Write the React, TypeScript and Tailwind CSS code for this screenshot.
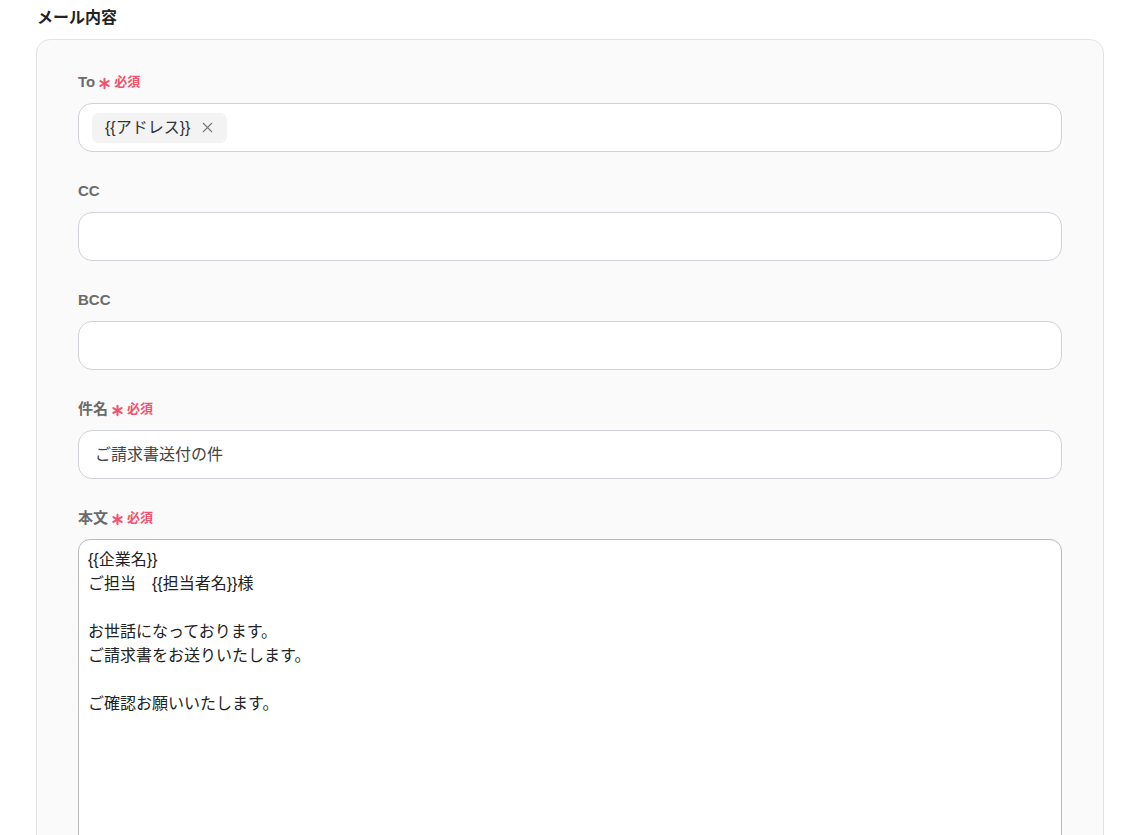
import { X, Asterisk } from "lucide-react";

const font = { fontFamily: '"Liberation Sans", "Noto Sans CJK JP", sans-serif' };

function Label({ text, required }: { text: string; required?: boolean }) {
  return (
    <div className="flex items-center h-5 mb-[11px]">
      <span className="text-[15px] font-bold text-[#6b6b6b]">{text}</span>
      {required && (
        <>
          <Asterisk size={19} strokeWidth={2.6} className="text-[#f5506c] ml-[0px] mr-[0px] mt-[3px]" />
          <span className="text-[13px] font-bold text-[#f5506c]">必須</span>
        </>
      )}
    </div>
  );
}

export default function App() {
  const body = `{{企業名}}
ご担当　{{担当者名}}様

お世話になっております。
ご請求書をお送りいたします。

ご確認お願いいたします。`;

  return (
    <div className="bg-white min-h-[835px] h-[835px] overflow-hidden" style={font}>
      <div className="pl-[36px] pr-[36px] pt-[7px]">
        <h2 className="text-[16px] font-bold text-[#222] h-[22px] leading-[22px] ml-[1px]">メール内容</h2>
        <div className="mt-[10px] bg-[#fafafa] border border-[#e3e3e6] rounded-[14px] px-[41px] pt-[32px] h-[900px]">
          <div className="mb-[29px]">
            <Label text="To" required />
            <div className="h-[49px] bg-white border border-[#cfd2d9] rounded-[14px] flex items-center px-[13px]">
              <div className="h-[30px] bg-[#f3f3f3] rounded-[7px] flex items-center pl-[13px] pr-[11px] gap-[9px]">
                <span className="text-[16px] text-[#333]">{"{{アドレス}}"}</span>
                <X size={17} strokeWidth={1.5} className="text-[#777]" />
              </div>
            </div>
          </div>
          <div className="mb-[29px]">
            <Label text="CC" />
            <div className="h-[49px] bg-white border border-[#cfd2d9] rounded-[14px]" />
          </div>
          <div className="mb-[29px]">
            <Label text="BCC" />
            <div className="h-[49px] bg-white border border-[#cfd2d9] rounded-[14px]" />
          </div>
          <div className="mb-[29px]">
            <Label text="件名" required />
            <div className="h-[49px] bg-white border border-[#cfd2d9] rounded-[14px] flex items-center px-[16px]">
              <span className="text-[16px] text-[#444]">ご請求書送付の件</span>
            </div>
          </div>
          <div>
            <Label text="本文" required />
            <div className="h-[400px] bg-white border border-[#b9b9b9] rounded-[12px] px-[9px] pt-[8px] whitespace-pre-wrap text-[16px] leading-[24px] text-[#222]">
              {body}
            </div>
          </div>
        </div>
      </div>
    </div>
  );
}
